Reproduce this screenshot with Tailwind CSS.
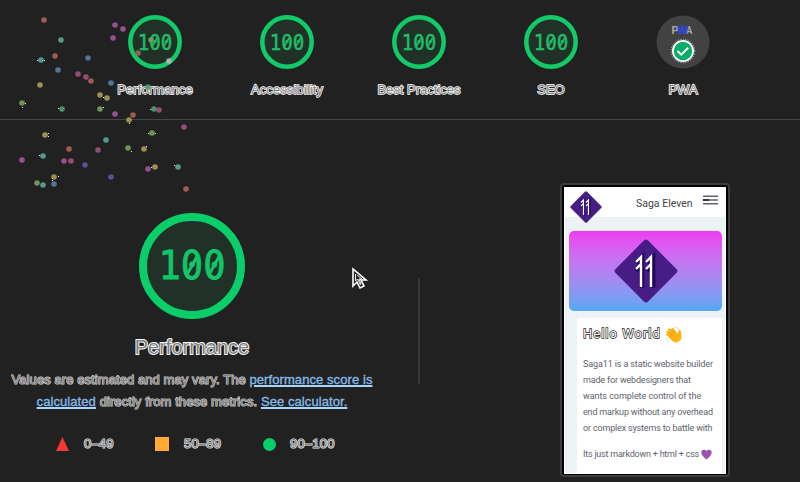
<!DOCTYPE html>
<html lang="en">
<head>
<meta charset="utf-8">
<title>Lighthouse report</title>
<script src="https://cdn.jsdelivr.net/npm/@tailwindcss/browser@4"></script>
</head>
<body class="relative h-[482px] w-[800px] overflow-hidden bg-[#212121] font-['Liberation_Sans',Arial,sans-serif] text-[#808080]">
<svg class="absolute size-0">
  <symbol id="disc" viewBox="0 0 54 54">
    <circle cx="27" cy="27" r="24.7" fill="#223127" stroke="#13ca69" stroke-width="4.5"/>
    <path d="M24.6 31l4.4-8M36.1 31l4.4-8" stroke="#20bd68" stroke-width="1.6"/>
  </symbol>
  <symbol id="rune" viewBox="0 0 64 64">
    <rect x="9" y="9" width="46" height="46" rx="3" transform="rotate(45 32 32)" fill="#481c85"/>
    <path d="M28 49V18l-6 6m6 2l-6 6M39 49V18l-6 6m6 2l-6 6" fill="none" stroke="#1e075c" stroke-width="4.5"/>
    <path d="M27 48V18l-5 5m5 2l-5 5M37 48V18l-5 5m5 2l-5 5" fill="none" stroke="#fff" stroke-width="2.4"/>
  </symbol>
</svg>
<header class="flex h-[120px] items-start border-b border-[#444746] pl-[89px] pt-[15px] text-[13px] leading-4">
  <div class="flex w-[132px] flex-col items-center gap-[13px]"><svg class="size-[54px]"><use href="#disc"/><text x="9.8" y="34.5" font-size="20.5" textLength="34.5" lengthAdjust="spacingAndGlyphs" font-family="DejaVu Sans Mono, monospace" fill="#20bd68" stroke="#20bd68" stroke-width=".5">100</text></svg><div class="tracking-[.1px] [-webkit-text-stroke:1.4px_#fff] [paint-order:stroke_fill]">Performance</div></div>
  <div class="flex w-[132px] flex-col items-center gap-[13px]"><svg class="size-[54px]"><use href="#disc"/><text x="9.8" y="34.5" font-size="20.5" textLength="34.5" lengthAdjust="spacingAndGlyphs" font-family="DejaVu Sans Mono, monospace" fill="#20bd68" stroke="#20bd68" stroke-width=".5">100</text></svg><div class="tracking-[.1px] [-webkit-text-stroke:1.4px_#fff] [paint-order:stroke_fill]">Accessibility</div></div>
  <div class="flex w-[132px] flex-col items-center gap-[13px]"><svg class="size-[54px]"><use href="#disc"/><text x="9.8" y="34.5" font-size="20.5" textLength="34.5" lengthAdjust="spacingAndGlyphs" font-family="DejaVu Sans Mono, monospace" fill="#20bd68" stroke="#20bd68" stroke-width=".5">100</text></svg><div class="[-webkit-text-stroke:1.4px_#fff] [paint-order:stroke_fill]">Best Practices</div></div>
  <div class="flex w-[132px] flex-col items-center gap-[13px]"><svg class="size-[54px]"><use href="#disc"/><text x="9.8" y="34.5" font-size="20.5" textLength="34.5" lengthAdjust="spacingAndGlyphs" font-family="DejaVu Sans Mono, monospace" fill="#20bd68" stroke="#20bd68" stroke-width=".5">100</text></svg><div class="[-webkit-text-stroke:1.4px_#fff] [paint-order:stroke_fill]">SEO</div></div>
  <div class="flex w-[132px] flex-col items-center gap-[13px]">
    <svg class="size-[54px]" viewBox="0 0 54 54"><circle cx="27" cy="27" r="26.5" fill="#424242"/>
      <g font-family="Liberation Sans" font-weight="bold" font-size="10"><text x="15.5" y="19" fill="#aaa" textLength="7" lengthAdjust="spacingAndGlyphs">P</text><text x="29.5" y="19" fill="#aaa" textLength="7" lengthAdjust="spacingAndGlyphs">A</text><text x="21.5" y="18.5" fill="#3048d0" stroke="#3048d0" stroke-width=".7" textLength="10.5" lengthAdjust="spacingAndGlyphs">W</text></g>
      <circle cx="27" cy="36" r="10.1" fill="#0bad68" stroke="#fff" stroke-width="1.8"/><circle cx="27" cy="36" r="11.8" fill="none" stroke="#fff" stroke-dasharray="1 1.5" stroke-width=".7"/><path d="M21.5 36l3.7 3.7 7-7" fill="none" stroke="#fff" stroke-width="2"/></svg><div class="[-webkit-text-stroke:1.4px_#fff] [paint-order:stroke_fill]">PWA</div></div>
</header>
<main class="flex">
  <section class="flex h-[362px] w-[384px] shrink-0 flex-col items-center pt-[93px]">
    <svg class="size-[106px]" viewBox="0 0 106 106"><circle cx="53" cy="53" r="49" fill="#223127" stroke="#09ce6a" stroke-width="8"/>
      <text x="19.5" y="66.2" font-size="39" textLength="67" lengthAdjust="spacingAndGlyphs" font-family="DejaVu Sans Mono, monospace" fill="#11c669" stroke="#11c669" stroke-width=".8">100</text><path d="M48.3 61l10-18M70.4 61l10-18" stroke="#11c669" stroke-width="3"/></svg>
    <h1 class="mt-[15px] text-[20px] leading-[26px] [-webkit-text-stroke:1.8px_#fff] [paint-order:stroke_fill]">Performance</h1>
    <p class="mt-[9px] whitespace-nowrap text-center text-[13px] leading-[22px] tracking-[.08px] [-webkit-text-stroke:1px_#ddd] [paint-order:stroke_fill]">Values are estimated and may vary. The <a class="text-[#80b8ea] underline decoration-2 [-webkit-text-stroke:.3px_#a5d4ff]">performance score is</a><br><a class="text-[#80b8ea] underline decoration-2 [-webkit-text-stroke:.3px_#a5d4ff]">calculated</a> directly from these metrics. <a class="text-[#80b8ea] underline decoration-2 [-webkit-text-stroke:.3px_#a5d4ff]">See calculator.</a></p>
    <div class="mt-[21px] flex h-5 w-[280px] items-center self-start pl-[56px] text-[13px] tracking-[.2px] [-webkit-text-stroke:1.2px_#eee] [paint-order:stroke_fill]">
      <svg class="mr-[15px] h-[14px] w-[13px] shrink-0"><path d="M6.5 0L13 14H0z" fill="#f43835"/></svg><span class="w-[71px] shrink-0">0–49</span>
      <i class="mr-[15px] size-[14px] shrink-0 bg-[#ffab36]"></i><span class="w-[79px] shrink-0">50–89</span>
      <i class="mr-[14px] size-[13px] shrink-0 rounded-full bg-[#08ce69]"></i><span class="shrink-0">90–100</span>
    </div>
  </section>
  <div class="ml-[34px] mt-[158px] h-[106px] w-[2px] bg-[#383838]"></div>
  <section class="ml-[140px] mt-[63px] h-[294px] w-[170px] rounded-[4px] border-2 border-[#3e3e3e] bg-black p-[2px]">
    <div class="flex h-[287px] w-[162px] flex-col border border-white bg-[#edf3f5] font-[Roboto,sans-serif] text-[#60636b]">
      <div class="flex h-[29px] shrink-0 items-center bg-white pl-[5px] pr-[7px]"><svg class="mt-[8px] size-[32px] shrink-0"><use href="#rune"/></svg><span class="ml-[34px] mt-[2px] whitespace-nowrap text-[10.5px] text-[#444]">Saga Eleven</span><svg class="mb-[5px] ml-auto h-[10px] w-[15px] shrink-0"><path d="M0 1.2h15M0 5h15M0 8.8h15" stroke="#606070" stroke-width="1.5"/><path d="M0 5h6" stroke="#111" stroke-width="1.5"/></svg></div>
      <div class="ml-[4px] mt-[14px] flex h-[80px] w-[153px] shrink-0 items-center justify-center rounded-[5px] bg-linear-to-b from-[#ee3af0] to-[#50a7f4]"><svg class="size-[64px]"><use href="#rune"/></svg></div>
      <div class="ml-[12px] mt-[7px] h-[155px] w-[145px] shrink-0 bg-white pl-[6px] pt-[6px]">
        <h2 class="flex items-center gap-[4px] whitespace-nowrap text-[13px] leading-5 tracking-[1px] text-white"><span class="[-webkit-text-stroke:1.4px_#222] [paint-order:stroke_fill]">Hello World</span>
          <svg class="size-[17px] shrink-0" viewBox="0 0 17 17"><path d="M1 5.5c1-1 1.7-.6 2.4.1L3 3c.8-1.3 1.9-.8 2.5 0l.7.8.5-1.4c1-.9 2-.2 2.5.6L13 8l.3-3c.2-1.3 2.4-1.2 2.5.2l.7 4.6c.3 2-.4 4-2 5.2-2.6 2-5.3 1.8-7.3-.2L1.5 9c-.7-1 .2-1.7.8-1.5L1 6z" fill="#ffb414"/><path d="M4 6l4 4M6 4l4 4M3 8l3 3" stroke="#e78b10" stroke-width=".5"/><path d="M10 1q3 0 4 3M1 12q1 3 3 4" fill="none" stroke="#c6ced5" stroke-width=".8"/></svg></h2>
        <p class="mt-[12px] whitespace-nowrap text-[9px] leading-[16px] tracking-[-.17px]"><span class="tracking-[-.12px]">Saga11 is a static website builder</span><br>made for webdesigners that<br><span class="tracking-[-.05px]">wants complete control of the</span><br>end markup without any overhead<br>or complex systems to battle with</p>
        <p class="mt-[10px] flex items-center gap-[2px] whitespace-nowrap text-[9px] leading-4 tracking-[-.22px]">Its just markdown + html + css <svg class="size-[11px]" viewBox="0 0 11 11"><path d="M5.5 10.5C2 7.6.3 5.8.3 3.3.3.5 4-.2 5.5 2.2 7-.2 10.7.5 10.7 3.3c0 2.5-1.7 4.3-5.2 7.2z" fill="#9951b4"/></svg></p>
      </div>
    </div>
  </section>
</main>
<!-- Confetti -->
<svg class="absolute left-0 top-0 h-[200px] w-[200px]" opacity=".9">
  <g fill="#aa6259"><circle cx="44" cy="20" r="2.8"/><circle cx="55" cy="56" r="2.8"/><circle cx="91" cy="81" r="2.8"/><circle cx="138" cy="53" r="2.8"/><circle cx="133" cy="115" r="2.8"/><circle cx="69" cy="149" r="2.8"/><circle cx="186" cy="189" r="2.8"/></g>
  <g fill="#a4559e"><circle cx="115" cy="25" r="2.8"/><circle cx="123" cy="29" r="2.8"/><circle cx="113" cy="38" r="2.8"/><circle cx="115" cy="114" r="2.8"/><circle cx="22" cy="160" r="2.8"/><circle cx="64" cy="161" r="2.8"/><circle cx="148" cy="169" r="2.8"/></g>
  <g fill="#a5507d"><circle cx="78" cy="74" r="2.8"/><circle cx="86" cy="77" r="2.8"/><circle cx="159" cy="110" r="2.8"/><circle cx="184" cy="127" r="2.8"/><circle cx="98" cy="150" r="2.8"/><circle cx="71" cy="161" r="2.8"/></g>
  <g fill="#5aa69a"><circle cx="61" cy="40" r="2.8"/><circle cx="41" cy="60" r="2.8"/><circle cx="106" cy="140" r="2.8"/><circle cx="43" cy="156" r="2.8"/><circle cx="178" cy="167" r="2.8"/><circle cx="43" cy="185" r="2.8"/></g>
  <g fill="#4d9f76"><circle cx="62" cy="109" r="2.8"/><circle cx="154" cy="109" r="2.8"/><circle cx="148" cy="87" r="2.8"/></g>
  <g fill="#537fa8"><circle cx="88" cy="58" r="2.8"/><circle cx="58" cy="70" r="2.8"/><circle cx="111" cy="83" r="2.8"/><circle cx="54" cy="184" r="2.8"/></g>
  <g fill="#6553ac"><circle cx="85" cy="165" r="2.8"/><circle cx="111" cy="177" r="2.8"/></g>
  <g fill="#76a260"><circle cx="22" cy="103" r="2.8"/><circle cx="100" cy="109" r="2.8"/><circle cx="152" cy="133" r="2.8"/><circle cx="128" cy="148" r="2.8"/><circle cx="37" cy="183" r="2.8"/><circle cx="151" cy="40" r="2.8"/></g>
  <g fill="#aa9c59"><circle cx="40" cy="85" r="2.8"/><circle cx="100" cy="95" r="2.8"/><circle cx="107" cy="98" r="2.8"/><circle cx="129" cy="120" r="2.8"/><circle cx="45" cy="135" r="2.8"/><circle cx="144" cy="149" r="2.8"/><circle cx="155" cy="167" r="2.8"/><circle cx="54" cy="177" r="2.8"/></g>
  <circle cx="169" cy="61" r="2.8" fill="#bdb5b9"/>
  <path d="M37 60.5h1M44 60.5h1M22 107.5h1M25 103.5h1M103 97.5h1M58 108.5h1M103 107.5h1M150 109.5h1M48 133.5h1M48 136.5h1M39 155.5h1M129 123.5h1M148 133.5h1M155 133.5h1M131 151.5h1M146 146.5h1M151 167.5h1M174 165.5h1M58 176.5h1M52 180.5h1" stroke="#fff"/>
</svg>
<!-- Pointer -->
<svg class="absolute left-[351px] top-[267px] h-[24px] w-[18px]"><path d="M2 2v17l4-4 3 6 4-2-3-6h5z" fill="#242424" stroke="#fff" stroke-width="1.6"/><path d="M4.5 7v7l2-2 3 6M6 8l5 4H8l2 5" fill="none" stroke="#eee" stroke-width="1"/></svg>
</body>
</html>
